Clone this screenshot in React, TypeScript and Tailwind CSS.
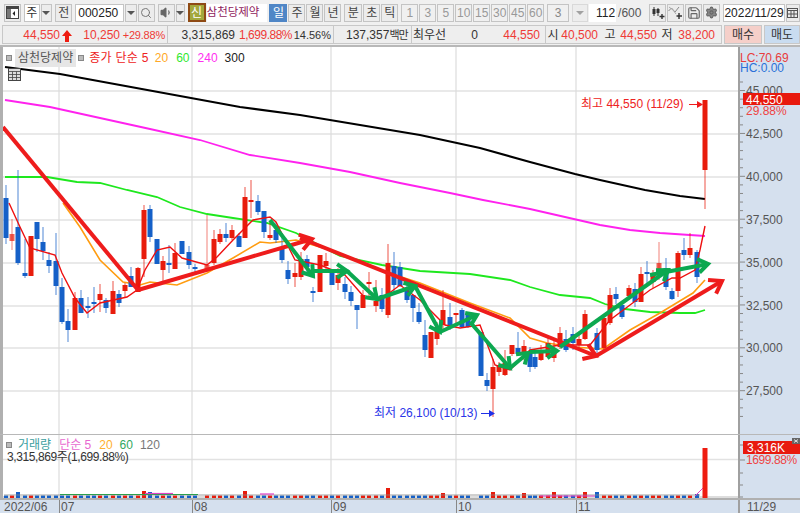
import { ReactNode } from 'react';
import { Search, Settings, Save, Volume1 } from 'lucide-react';

// [x, high, top, bottom, low, colour] all in page pixels
type Candle = [number, number, number, number, number, 'r' | 'b' | 'p'];

const candles: Candle[] = [
  [6, 185, 198, 238, 244, 'b'], [12, 219, 234, 241, 250, 'p'], [18, 170, 227, 263, 265, 'b'], [25, 239, 273, 276, 278, 'b'],
  [31, 236, 236, 276, 276, 'r'], [37, 222, 222, 239, 252, 'b'], [43, 227, 242, 251, 260, 'b'], [49, 252, 260, 266, 273, 'b'],
  [56, 233, 261, 286, 295, 'b'], [62, 278, 287, 322, 324, 'b'], [68, 309, 321, 330, 342, 'b'], [75, 292, 298, 330, 330, 'r'],
  [81, 290, 298, 313, 313, 'b'], [88, 297, 306, 307, 318, 'b'], [94, 287, 302, 304, 313, 'b'], [100, 284, 294, 300, 312, 'r'],
  [106, 298, 300, 308, 313, 'b'], [113, 281, 291, 314, 314, 'r'], [119, 290, 294, 303, 307, 'b'], [125, 283, 285, 291, 297, 'r'],
  [131, 267, 276, 287, 287, 'b'], [138, 267, 268, 292, 292, 'r'], [144, 205, 210, 259, 277, 'r'], [150, 205, 209, 237, 242, 'b'],
  [157, 239, 239, 264, 264, 'b'], [163, 256, 261, 270, 282, 'r'], [169, 245, 263, 265, 273, 'b'], [175, 243, 253, 269, 269, 'r'],
  [182, 241, 241, 254, 254, 'b'], [189, 246, 252, 265, 269, 'b'], [195, 264, 267, 269, 272, 'b'], [207, 215, 265, 271, 272, 'p'],
  [214, 230, 239, 263, 265, 'r'], [220, 229, 234, 242, 244, 'r'], [226, 223, 234, 238, 242, 'b'], [232, 225, 230, 238, 240, 'r'],
  [239, 233, 236, 247, 247, 'b'], [245, 187, 197, 238, 238, 'r'], [251, 180, 200, 202, 218, 'r'], [258, 195, 201, 212, 215, 'b'],
  [264, 211, 211, 232, 238, 'b'], [270, 222, 235, 238, 240, 'r'], [276, 222, 230, 240, 243, 'b'], [282, 233, 247, 260, 263, 'b'],
  [288, 261, 270, 279, 284, 'b'], [295, 263, 273, 277, 287, 'r'], [301, 252, 259, 277, 280, 'r'], [307, 255, 259, 267, 276, 'b'],
  [313, 287, 291, 293, 302, 'b'], [320, 255, 255, 292, 292, 'r'], [326, 253, 261, 266, 270, 'r'], [332, 269, 269, 285, 285, 'b'],
  [338, 268, 275, 283, 290, 'r'], [345, 277, 284, 292, 299, 'b'], [351, 286, 292, 301, 306, 'b'], [357, 305, 305, 310, 329, 'b'],
  [363, 290, 295, 308, 308, 'r'], [369, 272, 282, 283, 297, 'r'], [376, 280, 301, 306, 312, 'r'], [382, 288, 295, 309, 312, 'b'],
  [388, 244, 263, 315, 318, 'r'], [394, 252, 266, 285, 292, 'b'], [400, 262, 267, 286, 287, 'b'], [407, 285, 290, 300, 303, 'b'],
  [413, 295, 295, 308, 322, 'b'], [419, 303, 312, 322, 324, 'b'], [425, 320, 335, 350, 357, 'b'], [431, 332, 332, 358, 358, 'r'],
  [437, 322, 327, 339, 345, 'r'], [443, 290, 310, 325, 330, 'r'], [450, 303, 317, 328, 330, 'b'], [456, 313, 313, 315, 325, 'r'],
  [462, 308, 310, 327, 327, 'b'], [468, 313, 315, 327, 328, 'b'], [481, 332, 332, 376, 376, 'b'], [487, 373, 380, 386, 391, 'b'],
  [493, 359, 367, 389, 417, 'r'], [499, 362, 365, 372, 376, 'r'], [505, 350, 363, 375, 376, 'r'], [512, 345, 345, 354, 356, 'r'],
  [518, 332, 348, 354, 356, 'b'], [524, 340, 346, 352, 360, 'r'], [530, 347, 353, 367, 372, 'b'], [535, 352, 357, 367, 369, 'b'],
  [541, 345, 352, 360, 361, 'r'], [548, 335, 343, 357, 358, 'r'], [554, 338, 350, 358, 362, 'r'], [560, 327, 333, 347, 349, 'r'],
  [566, 330, 339, 350, 352, 'b'], [573, 327, 334, 343, 350, 'b'], [579, 335, 339, 345, 350, 'r'], [585, 310, 314, 339, 340, 'r'],
  [597, 328, 333, 350, 357, 'b'], [604, 318, 318, 348, 350, 'r'], [610, 288, 295, 323, 325, 'r'], [616, 287, 294, 299, 304, 'b'],
  [622, 305, 305, 317, 319, 'b'], [629, 285, 288, 296, 300, 'r'], [635, 283, 289, 302, 307, 'b'], [641, 267, 274, 302, 302, 'r'],
  [647, 261, 272, 274, 287, 'b'], [653, 270, 276, 282, 288, 'r'], [659, 242, 263, 272, 280, 'p'], [666, 258, 268, 287, 290, 'b'],
  [672, 288, 291, 299, 300, 'b'], [678, 251, 253, 291, 297, 'r'], [684, 238, 250, 255, 260, 'b'], [690, 233, 248, 255, 258, 'r'],
  [697, 250, 252, 277, 283, 'b'], [705, 100, 100, 170, 209, 'r'],
];

const red5 = '9,203 20,227 30,248 55,255 62,273 75,298 87,313 100,303 127,297 137,290 145,270 157,250 170,247 182,258 207,265 217,257 233,240 253,220 270,217 276,222 295,260 320,265 345,275 365,298 380,300 400,285 420,300 445,325 460,328 480,325 495,365 510,370 530,350 560,345 590,345 610,320 630,305 650,290 672,278 680,278 695,270 700,250 705,226';
const orange20 = '63,203 80,227 100,260 123,282 140,285 150,282 177,285 207,273 233,258 260,242 270,243 296,240 330,250 380,270 420,283 470,303 510,318 530,338 547,343 573,347 603,349 630,330 660,313 693,293 705,280';
const green60 = '5,177 47,177 77,182 100,183 127,190 157,197 180,207 207,214 233,218 267,223 296,233 340,256 382,265 420,271 470,274 510,280 530,287 560,295 590,298 605,304 625,309 650,312 680,313 695,313 705,310';
const magenta240 = '5,100 50,107 100,118 150,129 200,140 250,155 300,163 350,172 400,183 450,193 483,200 530,209 565,217 600,225 630,230 660,233 705,236';
const black300 = '5,67 60,74 120,85 180,96 240,107 300,115 360,125 420,135 480,148 530,162 575,174 600,180 645,190 680,196 705,199';

const redArrows = [[138, 290, 312, 239], [300, 238, 596, 356], [596, 356, 722, 281]];
const greenArrows = [
  [270, 220, 313, 276], [313, 271, 347, 271], [347, 271, 377, 299], [377, 299, 415, 286], [415, 286, 440, 332],
  [440, 332, 477, 315], [470, 322, 510, 368], [510, 368, 528, 353], [530, 352, 557, 351], [560, 347, 668, 270], [650, 275, 708, 264],
];

const priceTicks = [[45000, 91], [42500, 134], [40000, 177], [37500, 220], [35000, 263], [32500, 306], [30000, 348], [27500, 391]];
const months = [[59, '07'], [192, '08'], [331, '09'], [456, '10'], [576, '11']] as const;

const candleColor = { r: '#e81c0c', b: '#1560c8', p: '#e81c0c' };

function Arrow({ a, color, size }: { a: number[]; color: string; size: number }) {
  const [x1, y1, x2, y2] = a;
  const t = Math.atan2(y2 - y1, x2 - x1);
  const p = (d: number) => `${x2 - size * Math.cos(t + d)},${y2 - size * Math.sin(t + d)}`;
  return (
    <g stroke={color} strokeWidth="4" fill="none">
      <line x1={x1} y1={y1} x2={x2} y2={y2} />
      <polyline points={`${p(0.6)} ${x2},${y2} ${p(-0.6)}`} />
    </g>
  );
}

function Btn({ children, className = 'w-[17px]' }: { children: ReactNode; className?: string }) {
  return (
    <div className={`h-[18px] shrink-0 flex items-center justify-center bg-[#ececec] border border-[#c4c4c4] text-[12px] text-[#444] ${className}`}>
      {children}
    </div>
  );
}

function DownBtn({ className = 'w-[12px]' }: { className?: string }) {
  return (
    <Btn className={className}>
      <span className="w-0 h-0 border-x-[4px] border-x-transparent border-t-[4px] border-t-[#555]" />
    </Btn>
  );
}

function Toolbar() {
  return (
    <div className="h-[25px] flex items-center pl-[4px] gap-[1px]">
      <Btn className="w-[17px]">
        <svg width="13" height="13" viewBox="0 0 13 13">
          <rect x="0.5" y="0.5" width="12" height="12" fill="#fff" stroke="#444" />
          <rect x="1" y="1" width="11" height="2" fill="#444" />
          <rect x="1" y="3" width="4" height="9" fill="#777" />
          <path d="M9 5 L6.5 7.5 L9 10 Z" fill="#222" />
        </svg>
      </Btn>
      <div className="w-[1px]" />
      <div className="h-[18px] w-[17px] bg-white border border-[#c4c4c4] flex items-center justify-center text-[12px] text-[#333]">주</div>
      <DownBtn className="w-[11px]" />
      <div className="w-[2px]" />
      <Btn className="w-[17px]">전</Btn>
      <div className="w-[1px]" />
      <div className="h-[18px] w-[53px] bg-white border border-[#c4c4c4] pl-[2px] text-[12px] leading-[16px] text-[#222]">000250</div>
      <DownBtn />
      <Btn className="w-[17px]"><Search size={12} color="#777" strokeWidth={2} /></Btn>
      <div className="w-[1px]" />
      <Btn className="w-[17px]"><Volume1 size={13} color="#666" fill="#666" /></Btn>
      <DownBtn className="w-[9px]" />
      <div className="w-[1px]" />
      <div className="h-[19px] w-[18px] shrink-0 bg-[#a3a83c] border-2 border-[#8f4a14] flex items-center justify-center text-[12px] text-white">신</div>
      <div className="h-[18px] w-[60px] shrink-0 bg-white flex items-center text-[11.5px] whitespace-nowrap text-[#8f1a5c]">삼천당제약</div>
      <div className="w-[1px]" />
      <Btn className="w-[18px] bg-[#4f86c6]! text-white! border-[#4f86c6]!">일</Btn>
      <Btn>주</Btn>
      <Btn>월</Btn>
      <Btn>년</Btn>
      <div className="w-[1px]" />
      <Btn className="w-[18px]">분</Btn>
      <Btn>초</Btn>
      <Btn>틱</Btn>
      <div className="w-[1px]" />
      {['1', '3', '5', '10', '15', '30', '45', '60'].map((n, i) => (
        <Btn key={i} className="w-[17px] text-[#999]! bg-[#f0f0f0]!">{n}</Btn>
      ))}
      <div className="w-[1px]" />
      <Btn className="w-[22px] text-[#888]! bg-[#f0f0f0]!">3</Btn>
      <div className="w-[1px]" />
      <DownBtn className="w-[16px] opacity-50" />
      <div className="h-[18px] w-[27px] shrink-0 bg-white text-right pr-[1px] text-[12px] leading-[18px] text-[#222]">112</div>
      <div className="w-[31px] shrink-0 text-[12px] text-[#555] pl-[1px]">/600</div>
      <Btn>
        <svg width="14" height="13" viewBox="0 0 14 13">
          <path d="M3 1v9M7 2v8" stroke="#333" />
          <rect x="1.5" y="3" width="3" height="5" fill="#333" />
          <rect x="5.5" y="3" width="3" height="4" fill="#333" />
          <path d="M11 8v5M8.5 10.5h5" stroke="#333" strokeWidth="1.4" />
        </svg>
      </Btn>
      <Btn>
        <svg width="15" height="13" viewBox="0 0 15 13" fill="none">
          <path d="M0.5 5 L3.5 2 L7 6 L11 1" stroke="#888" />
          <path d="M1 1 L5 4 L8 8" stroke="#aaa" />
          <path d="M11 7v6M8.5 10h5.5" stroke="#333" strokeWidth="1.4" />
        </svg>
      </Btn>
      <Btn><Save size={14} color="#666" /></Btn>
      <Btn><Settings size={13} color="#666" fill="#888" /></Btn>
      <div className="w-[1px]" />
      <div className="h-[18px] w-[62px] shrink-0 bg-white border border-[#c4c4c4] text-[12px] leading-[16px] text-center text-[#222] whitespace-nowrap">2022/11/29</div>
      <Btn className="w-[14px]">
        <svg width="11" height="11" viewBox="0 0 11 11" fill="none" stroke="#555">
          <rect x="0.5" y="1.5" width="10" height="9" />
          <path d="M0 3.5h11M4 4v6M7 4v6M1 7h9" />
        </svg>
      </Btn>
    </div>
  );
}

function InfoBar() {
  return (
    <div className="h-[22px] flex items-start pl-[2px] border-b-2 border-[#b8b8b8] text-[12px] leading-[18px] whitespace-nowrap">
      <div className="h-[19px] w-[720px] flex border border-[#c8c8c8] bg-[#eeeeee]">
        <div className="w-[165px] flex text-[#ee3a36] border-r border-[#c8c8c8]">
          <span className="w-[57px] text-right">44,550</span>
          <svg width="12" height="14" viewBox="0 0 12 14" className="ml-[1px] mt-[3px]">
            <path d="M6 1 L11 7 H8 V13 H4 V7 H1 Z" fill="#ee1c10" />
          </svg>
          <span className="w-[47px] text-right">10,250</span>
          <span className="w-[45px] text-right text-[11px] tracking-[-0.2px]">+29.88%</span>
        </div>
        <div className="w-[166px] flex border-r border-[#c8c8c8]">
          <span className="w-[67px] text-right text-[#333]">3,315,869</span>
          <span className="w-[57px] text-right text-[#ee3a36] tracking-[-0.5px]">1,699.88%</span>
          <span className="w-[39px] text-right text-[#333] text-[11px]">14.56%</span>
        </div>
        <div className="w-[78px] flex border-r border-[#c8c8c8] text-[#333] pl-[12px]">137,357<span className="text-[11px] tracking-[-1px]">백만</span></div>
        <span className="w-[44px] pl-[1px] text-[#333]">최우선</span>
        <span className="w-[22px] text-[#333] text-right">0</span>
        <span className="w-[62px] text-[#ee3a36] text-right">44,550</span>
        <div className="flex-1 flex border-l border-[#c8c8c8] ml-[5px] text-[#ee3a36]">
          <span className="w-[14px] text-center text-[#333]">시</span>
          <span className="w-[38px] text-right">40,500</span>
          <span className="w-[20px] text-center text-[#333] ml-[2px]">고</span>
          <span className="w-[37px] text-right">44,550</span>
          <span className="w-[20px] text-center text-[#333]">저</span>
          <span className="w-[38px] text-right">38,200</span>
        </div>
      </div>
      <div className="w-[2px]" />
      <div className="h-[19px] w-[38px] bg-[#f5cfc9] border border-[#c8c8c8] text-center text-[#333]">매수</div>
      <div className="w-[2px]" />
      <div className="h-[19px] flex-1 bg-[#c9dcf0] border border-[#c8c8c8] text-center text-[#333]">매도</div>
    </div>
  );
}

function PricePlot() {
  return (
    <div className="relative w-[738px] h-[387px] bg-white border-l-[3px] border-[#b0b0b0]">
      <svg width="735" height="387" viewBox="3 47 735 387" className="block">
        {priceTicks.map(([p, y]) => <line key={p} x1="3" x2="738" y1={y} y2={y} stroke="#e2e2e2" strokeWidth="1.4" />)}
        {months.map(([x, m]) => <line key={m} x1={x} x2={x} y1="47" y2="434" stroke="#dcdcdc" strokeWidth="1.2" />)}
        <polyline points={black300} fill="none" stroke="#000" strokeWidth="2" />
        <polyline points={magenta240} fill="none" stroke="#ff22ee" strokeWidth="1.8" />
        <polyline points={green60} fill="none" stroke="#1ee81e" strokeWidth="1.8" />
        <polyline points={orange20} fill="none" stroke="#ff9c10" strokeWidth="1.6" />
        {candles.map(([x, hi, top, bot, lo, c]) => (
          <g key={x} fill={candleColor[c]}>
            <rect x={x - 0.5} y={hi} width="1" height={lo - hi} opacity={c === 'p' ? 0.55 : 0.75} />
            <rect x={x - 2.5} y={top} width="5" height={Math.max(bot - top, 2)} opacity={c === 'p' ? 0.7 : 1} />
          </g>
        ))}
        <polyline points={red5} fill="none" stroke="#ee1010" strokeWidth="1.4" />
        <line x1="3" y1="127" x2="138" y2="290" stroke="#ee1c1c" strokeWidth="4" />
        {redArrows.map((a, i) => <Arrow key={i} a={a} color="#ee1c1c" size={14} />)}
        {greenArrows.map((a, i) => <Arrow key={i} a={a} color="#0ca850" size={12} />)}
        {/* high / low markers */}
        <text x="581" y="108" fontSize="12" fill="#ee2222" fontFamily="'Liberation Sans','Noto Sans CJK KR',sans-serif">최고 44,550 (11/29)</text>
        <path d="M689 104.500H700" stroke="#ee1c1c" />
        <path d="M703 104.500L697 101V108Z" fill="#ee1c1c" />
        <text x="374" y="417" fontSize="12" fill="#2a35e8" fontFamily="'Liberation Sans','Noto Sans CJK KR',sans-serif">최저 26,100 (10/13)</text>
        <path d="M481 413.500H492" stroke="#2030e8" />
        <path d="M495 413.500L489 410V417Z" fill="#2030e8" />
      </svg>
      {/* legend sits on the plot */}
      <div className="absolute left-[3px] top-[3px] flex items-center gap-[2px] h-[16px] text-[12px] whitespace-nowrap">
        <span className="w-[6px] h-[6px] bg-[#bbb] border border-[#888]" />
        <span className="bg-[#e6e6e6] px-[3px] text-[#555] ml-[1px]">삼천당제약</span>
        <span className="w-[6px] h-[6px] bg-[#bbb] border border-[#888] mr-[3px]" />
        <span className="text-[#ee2222] tracking-[0.3px]">종가 단순 5</span>
        <span className="text-[#ffa826] ml-[4px]">20</span>
        <span className="text-[#2fe82f] ml-[6px]">60</span>
        <span className="text-[#ff30f0] ml-[6px]">240</span>
        <span className="text-[#222] ml-[5px]">300</span>
      </div>
      <svg width="15" height="15" viewBox="0 0 15 15" className="absolute left-[4px] top-[20px]" fill="#ddd" stroke="#444">
        <rect x="1.500" y="1.500" width="12" height="12" />
        <path d="M1.500 4.500h12M1.500 7.500h12M1.500 10.500h12M5.500 4.500v9M9.500 4.500v9" strokeWidth="0.8" />
      </svg>
    </div>
  );
}

function PriceAxis() {
  const minor = Array.from({ length: 40 }, (_, i) => 82 + i * 8.575);
  return (
    <div className="relative flex-1 h-[387px] bg-[#d5e0ee]">
      <svg width="62" height="387" viewBox="738 47 62 387" className="block">
        <rect x="738" y="47" width="2" height="387" fill="#a0a0a0" />
        {minor.map((y, i) => <line key={i} x1="740" x2={i % 5 === 1 ? 745 : 743} y1={y} y2={y} stroke="#888" />)}
        {priceTicks.map(([p, y]) => (
          <text key={p} x="746" y={y + 4} fontSize="12" fill="#555" fontFamily="'Liberation Sans',sans-serif">{p.toLocaleString('en-US')}</text>
        ))}
        <rect x="743" y="93" width="57" height="12" fill="#e8190e" />
        <text x="746" y="104" fontSize="12" fill="#fff" fontFamily="'Liberation Sans',sans-serif">44,550</text>
        <text x="746" y="115" fontSize="12" fill="#ee4444" fontFamily="'Liberation Sans',sans-serif">29.88%</text>
        <text x="740" y="62" fontSize="12" fill="#e83c3c" fontFamily="'Liberation Sans',sans-serif">LC:70.69</text>
        <text x="740" y="72" fontSize="12" fill="#2a70d8" fontFamily="'Liberation Sans',sans-serif">HC:0.00</text>
      </svg>
    </div>
  );
}

function VolumePlot() {
  const bump: Record<number, number> = { 18: 492, 144: 491, 150: 492, 245: 491, 388: 488, 443: 493, 493: 492, 524: 493, 554: 492, 585: 492, 597: 492, 697: 494 };
  return (
    <div className="relative w-[738px] h-[63px] bg-white border-l-[3px] border-[#b0b0b0]">
      <svg width="735" height="63" viewBox="3 435 735 63" className="block">
        <line x1="3" x2="738" y1="459.500" y2="459.500" stroke="#e2e2e2" strokeWidth="1.4" />
        <line x1="3" x2="738" y1="497" y2="497" stroke="#bbb" />
        {months.map(([x, m]) => <line key={m} x1={x} x2={x} y1="435" y2="498" stroke="#dcdcdc" strokeWidth="1.2" />)}
        {candles.slice(0, -1).map(([x, , , , , c]) => {
          const y = bump[x] ?? 495.500;
          return <rect key={x} x={x - 2} y={y} width="4" height={498 - y} fill={candleColor[c]} />;
        })}
        <line x1="4" x2="700" y1="495" y2="495" stroke="#888" strokeWidth="0.8" />
        <line x1="60" x2="198" y1="494.500" y2="494.500" stroke="#2da04c" strokeWidth="1.2" />
        <line x1="145" x2="173" y1="493.500" y2="493.500" stroke="#e040c8" strokeWidth="1.2" />
        <line x1="260" x2="274" y1="494" y2="494" stroke="#e040c8" strokeWidth="1.2" />
        <line x1="540" x2="595" y1="496" y2="496" stroke="#e040c8" strokeWidth="1.2" />
        <path d="M695 496 L704 487" stroke="#e040c8" />
        <rect x="702.500" y="448" width="5" height="50" fill="#ee1c10" />
      </svg>
      <div className="absolute left-[3px] top-[2px] flex items-center gap-[5px] h-[16px] text-[12px] whitespace-nowrap">
        <span className="w-[6px] h-[6px] bg-[#bbb] border border-[#888] mr-[1px]" />
        <span className="text-[#3aa0a0]">거래량</span>
        <span className="text-[#e868d0] ml-[3px]">단순 5</span>
        <span className="text-[#ffb030] ml-[3px]">20</span>
        <span className="text-[#30a860] ml-[2px]">60</span>
        <span className="text-[#777] ml-[2px]">120</span>
      </div>
      <div className="absolute left-[4px] top-[14px] text-[12px] leading-[16px] tracking-[-0.4px] text-[#333]">3,315,869주(1,699.88%)</div>
    </div>
  );
}

function VolumeAxis() {
  return (
    <div className="relative flex-1 h-[63px] bg-[#d5e0ee]">
      <svg width="62" height="63" viewBox="738 435 62 63" className="block">
        <rect x="738" y="435" width="2" height="63" fill="#a0a0a0" />
        {[445, 460, 473, 485, 497].map((y) => <line key={y} x1="740" x2={y === 460 ? 745 : 743} y1={y} y2={y} stroke="#888" />)}
        <rect x="743" y="441" width="57" height="13" fill="#e8190e" />
        <text x="747" y="452" fontSize="12" fill="#fff" fontFamily="'Liberation Sans',sans-serif">3,316K</text>
        <text x="746" y="464" fontSize="12" letterSpacing="-0.4" fill="#ee4444" fontFamily="'Liberation Sans',sans-serif">1699.88%</text>
        <rect x="792" y="438" width="8" height="6" fill="#666" />
        <path d="M794 439.500 L798 442.500 M798 439.500 L794 442.500" stroke="#fff" strokeWidth="0.8" />
      </svg>
    </div>
  );
}

function DateAxis() {
  return (
    <div className="relative h-[15px] bg-[#d5e0ee] border-t-2 border-[#b0b0b0] text-[12px] leading-[14px] text-[#555]">
      <span className="absolute left-[4px]">2022/06</span>
      {months.map(([x, m]) => (
        <span key={m} className="absolute top-0 border-l border-[#888] pl-[1px] h-[13px]" style={{ left: x }}>{m}</span>
      ))}
      <span className="absolute left-[738px] top-0 h-[13px] border-l-2 border-[#a0a0a0]" />
      <span className="absolute left-[747px]">11/29</span>
    </div>
  );
}

export default function App() {
  return (
    <div className="w-[800px] h-[513px] overflow-hidden flex flex-col bg-[#f0f0f0] font-['Liberation_Sans','Noto_Sans_CJK_KR',sans-serif]">
      <Toolbar />
      <InfoBar />
      <div className="flex">
        <PricePlot />
        <PriceAxis />
      </div>
      <div className="h-[1px] bg-[#b8b8b8]" />
      <div className="flex">
        <VolumePlot />
        <VolumeAxis />
      </div>
      <DateAxis />
    </div>
  );
}
